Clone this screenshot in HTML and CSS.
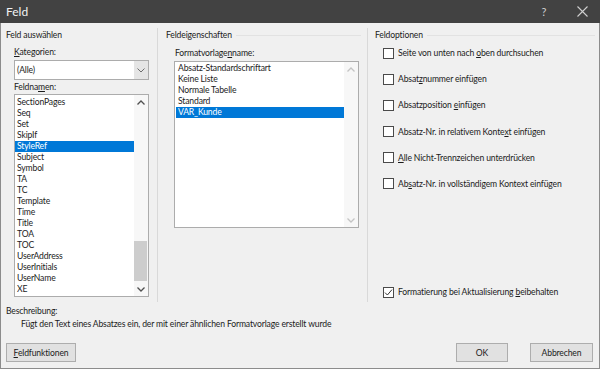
FILE: index.html
```html
<!DOCTYPE html>
<html lang="de">
<head>
    <meta charset="UTF-8">
    <title>Feld</title>
    <link rel="stylesheet" href="styles.css">
</head>
<body>
    <div class="dialog">
        <div class="titlebar">
            <span class="title">Feld</span>
            <span class="help">?</span>
            <span class="close">
                <svg width="11" height="11" viewBox="0 0 11 11"><path d="M0.5 0.5 L10.5 10.5 M10.5 0.5 L0.5 10.5" stroke="#d0d0d0" stroke-width="1.1" fill="none"/></svg>
            </span>
        </div>
        <div class="frame">
            <div class="panels">
                <!-- Feld auswählen -->
                <section class="group group-select">
                    <div class="group-title">Feld auswählen</div>
                    <div class="indent">
                        <div class="label label-cat"><u>K</u>ategorien:</div>
                        <div class="combo">
                            <span class="combo-value">(Alle)</span>
                            <span class="combo-btn">
                                <svg width="8" height="5" viewBox="0 0 8 5"><path d="M0.5 0.5 L4 4 L7.5 0.5" stroke="#6d6d6d" fill="none"/></svg>
                            </span>
                        </div>
                        <div class="label label-names">Feldna<u>m</u>en:</div>
                        <div class="listbox names">
                            <ul class="items">
                                <li>SectionPages</li>
                                <li>Seq</li>
                                <li>Set</li>
                                <li>SkipIf</li>
                                <li class="selected">StyleRef</li>
                                <li>Subject</li>
                                <li>Symbol</li>
                                <li>TA</li>
                                <li>TC</li>
                                <li>Template</li>
                                <li>Time</li>
                                <li>Title</li>
                                <li>TOA</li>
                                <li>TOC</li>
                                <li>UserAddress</li>
                                <li>UserInitials</li>
                                <li>UserName</li>
                                <li>XE</li>
                            </ul>
                            <div class="scrollbar">
                                <span class="arrow">
                                    <svg width="8" height="5" viewBox="0 0 8 5"><path d="M0.5 4.5 L4 1 L7.5 4.5" stroke="#505050" stroke-width="1.3" fill="none"/></svg>
                                </span>
                                <div class="track"><div class="thumb"></div></div>
                                <span class="arrow">
                                    <svg width="8" height="5" viewBox="0 0 8 5"><path d="M0.5 0.5 L4 4 L7.5 0.5" stroke="#505050" stroke-width="1.3" fill="none"/></svg>
                                </span>
                            </div>
                        </div>
                    </div>
                </section>

                <!-- Feldeigenschaften -->
                <section class="group group-props">
                    <div class="group-title line"><span>Feldeigenschaften</span></div>
                    <div class="indent">
                        <div class="label label-style">Formatvorlage<u>n</u>name:</div>
                        <div class="listbox styles">
                            <ul class="items">
                                <li>Absatz-Standardschriftart</li>
                                <li>Keine Liste</li>
                                <li>Normale Tabelle</li>
                                <li>Standard</li>
                                <li class="selected">VAR_Kunde</li>
                            </ul>
                            <div class="scrollbar disabled">
                                <span class="arrow">
                                    <svg width="8" height="5" viewBox="0 0 8 5"><path d="M0.5 4.5 L4 1 L7.5 4.5" stroke="#c4c4c4" stroke-width="1.3" fill="none"/></svg>
                                </span>
                                <div class="track"></div>
                                <span class="arrow">
                                    <svg width="8" height="5" viewBox="0 0 8 5"><path d="M0.5 0.5 L4 4 L7.5 0.5" stroke="#c4c4c4" stroke-width="1.3" fill="none"/></svg>
                                </span>
                            </div>
                        </div>
                    </div>
                </section>

                <!-- Feldoptionen -->
                <section class="group group-options">
                    <div class="group-title line"><span>Feldoptionen</span></div>
                    <div class="option first"><span class="check"></span><span>Seite von unten nach <u>o</u>ben durchsuchen</span></div>
                    <div class="option"><span class="check"></span><span>Absat<u>z</u>nummer einfügen</span></div>
                    <div class="option"><span class="check"></span><span>Absatzposition <u>e</u>infügen</span></div>
                    <div class="option"><span class="check"></span><span>Absatz-Nr. in relativem Konte<u>x</u>t einfügen</span></div>
                    <div class="option"><span class="check"></span><span><u>A</u>lle Nicht-Trennzeichen unterdrücken</span></div>
                    <div class="option"><span class="check"></span><span>Ab<u>s</u>atz-Nr. in vollständigem Kontext einfügen</span></div>
                    <div class="option last">
                        <span class="check">
                            <svg width="9" height="9" viewBox="0 0 9 9"><path d="M1 4.6 L3.4 7 L8 1.6" stroke="#333" stroke-width="1" fill="none"/></svg>
                        </span>
                        <span>Formatierung bei Aktualisierung <u>b</u>eibehalten</span>
                    </div>
                </section>
            </div>

            <div class="desc-label">Beschreibung:</div>
            <div class="desc-text">Fügt den Text eines Absatzes ein, der mit einer ähnlichen Formatvorlage erstellt wurde</div>

            <div class="footer">
                <button type="button" class="btn btn-codes"><u>F</u>eldfunktionen</button>
                <div class="spacer"></div>
                <button type="button" class="btn btn-ok">OK</button>
                <button type="button" class="btn btn-cancel">Abbrechen</button>
            </div>
        </div>
    </div>
</body>
</html>
```

FILE: styles.css
```css
* {
    box-sizing: border-box;
}
body {
    margin: 0;
    font-family: Lato, "Noto Sans", sans-serif;
    font-size: 8.6px;
    letter-spacing: -0.15px;
    color: #1b1b1b;
    background: #f0f0f0;
}
u {
    text-decoration-thickness: 1px;
    text-underline-offset: 1px;
}
.dialog {
    width: 600px;
    height: 369px;
    display: flex;
    flex-direction: column;
}
.titlebar {
    height: 23px;
    background-color: #424242;
    color: #f2f2f2;
    display: flex;
    align-items: center;
    padding-left: 6px;
    font-size: 12px;
    letter-spacing: 0;
}
.title {
    flex: 1;
}
.help {
    color: #cfcfcf;
    font-size: 11px;
    width: 14px;
    text-align: center;
    margin-right: 26px;
}
.close {
    width: 11px;
    height: 11px;
    margin-right: 12px;
    display: flex;
}
.frame {
    flex: 1;
    background-color: #f0f0f0;
    border: 1px solid #8c8c8c;
    border-top: none;
    display: flex;
    flex-direction: column;
}

/* three groups */
.panels {
    display: flex;
    margin-top: 5px;
    height: 274px;
}
.group {
    display: flex;
    flex-direction: column;
    line-height: 12px;
}
.group-title {
    height: 12px;
    margin-top: 1px;
    display: flex;
    align-items: center;
    gap: 4px;
    white-space: nowrap;
}
.group-title.line::after {
    content: "";
    flex: 1;
    height: 1px;
    background-color: #e2e2e2;
}
.group-select {
    width: 156px;
    padding-left: 5px;
}
.group-props {
    width: 210px;
    border-left: 1px solid #d9d9d9;
    padding-left: 8px;
    padding-right: 6px;
}
.group-options {
    flex: 1;
    border-left: 1px solid #d9d9d9;
    padding-left: 7px;
    padding-right: 4px;
    padding-bottom: 4px;
}
.indent {
    margin-left: 8px;
}
.label {
    height: 12px;
}
.label-cat {
    margin-top: 5px;
}
.label-names {
    margin-top: 1px;
    margin-bottom: 1px;
}
.label-style {
    margin-top: 6px;
    margin-left: 1px;
    margin-bottom: 2px;
}

/* combo box */
.combo {
    width: 135px;
    height: 20px;
    margin-top: 2px;
    display: flex;
    background: #fff;
    border: 1px solid #acacac;
}
.combo-value {
    flex: 1;
    padding-left: 2px;
    line-height: 18px;
}
.combo-btn {
    width: 14px;
    background-color: #e5e5e5;
    display: flex;
    align-items: center;
    justify-content: center;
}

/* list boxes */
.listbox {
    display: flex;
    background: #fff;
    border: 1px solid #acacac;
}
.listbox.names {
    width: 135px;
    height: 203px;
}
.listbox.styles {
    width: 185px;
    height: 167px;
}
.items {
    flex: 1;
    list-style: none;
    margin: 0;
    padding: 2px 0 0 0;
}
.styles .items {
    padding-top: 1px;
}
.items li {
    height: 11px;
    line-height: 11px;
    padding-left: 2px;
    white-space: nowrap;
}
.styles .items li {
    margin-left: 1px;
}
.items li.selected {
    background-color: #0078d7;
    color: #fff;
}
.scrollbar {
    width: 14px;
    display: flex;
    flex-direction: column;
    background-color: #f7f7f7;
}
.arrow {
    height: 14px;
    display: flex;
    align-items: center;
    justify-content: center;
}
.track {
    flex: 1;
    display: flex;
    flex-direction: column;
    justify-content: flex-end;
}
.thumb {
    height: 40px;
    margin: 0 1px 1px 0;
    background-color: #cdcdcd;
}

/* options */
.option {
    display: flex;
    align-items: center;
    height: 12px;
    margin-top: 14.2px;
    padding-left: 8px;
    white-space: nowrap;
}
.option.first {
    margin-top: 6px;
}
.option.last {
    margin-top: auto;
}
.check {
    width: 11px;
    height: 11px;
    border: 1px solid #4a4a4a;
    background: #fff;
    margin-right: 4px;
    display: flex;
    align-items: center;
    justify-content: center;
    flex-shrink: 0;
}

/* description */
.desc-label {
    margin-top: 3px;
    padding-left: 5px;
    line-height: 12px;
}
.desc-text {
    margin-top: 1px;
    padding-left: 20px;
    line-height: 12px;
}

/* buttons */
.footer {
    display: flex;
    margin-top: 13px;
    padding: 0 6px 0 5px;
}
.spacer {
    flex: 1;
}
.btn {
    height: 19px;
    font: inherit;
    letter-spacing: inherit;
    color: #1b1b1b;
    background-color: #e1e1e1;
    border: 1px solid #adadad;
    padding: 0;
}
.btn-codes {
    width: 70px;
}
.btn-ok {
    width: 52px;
    margin-right: 22px;
}
.btn-cancel {
    width: 63px;
}
```
